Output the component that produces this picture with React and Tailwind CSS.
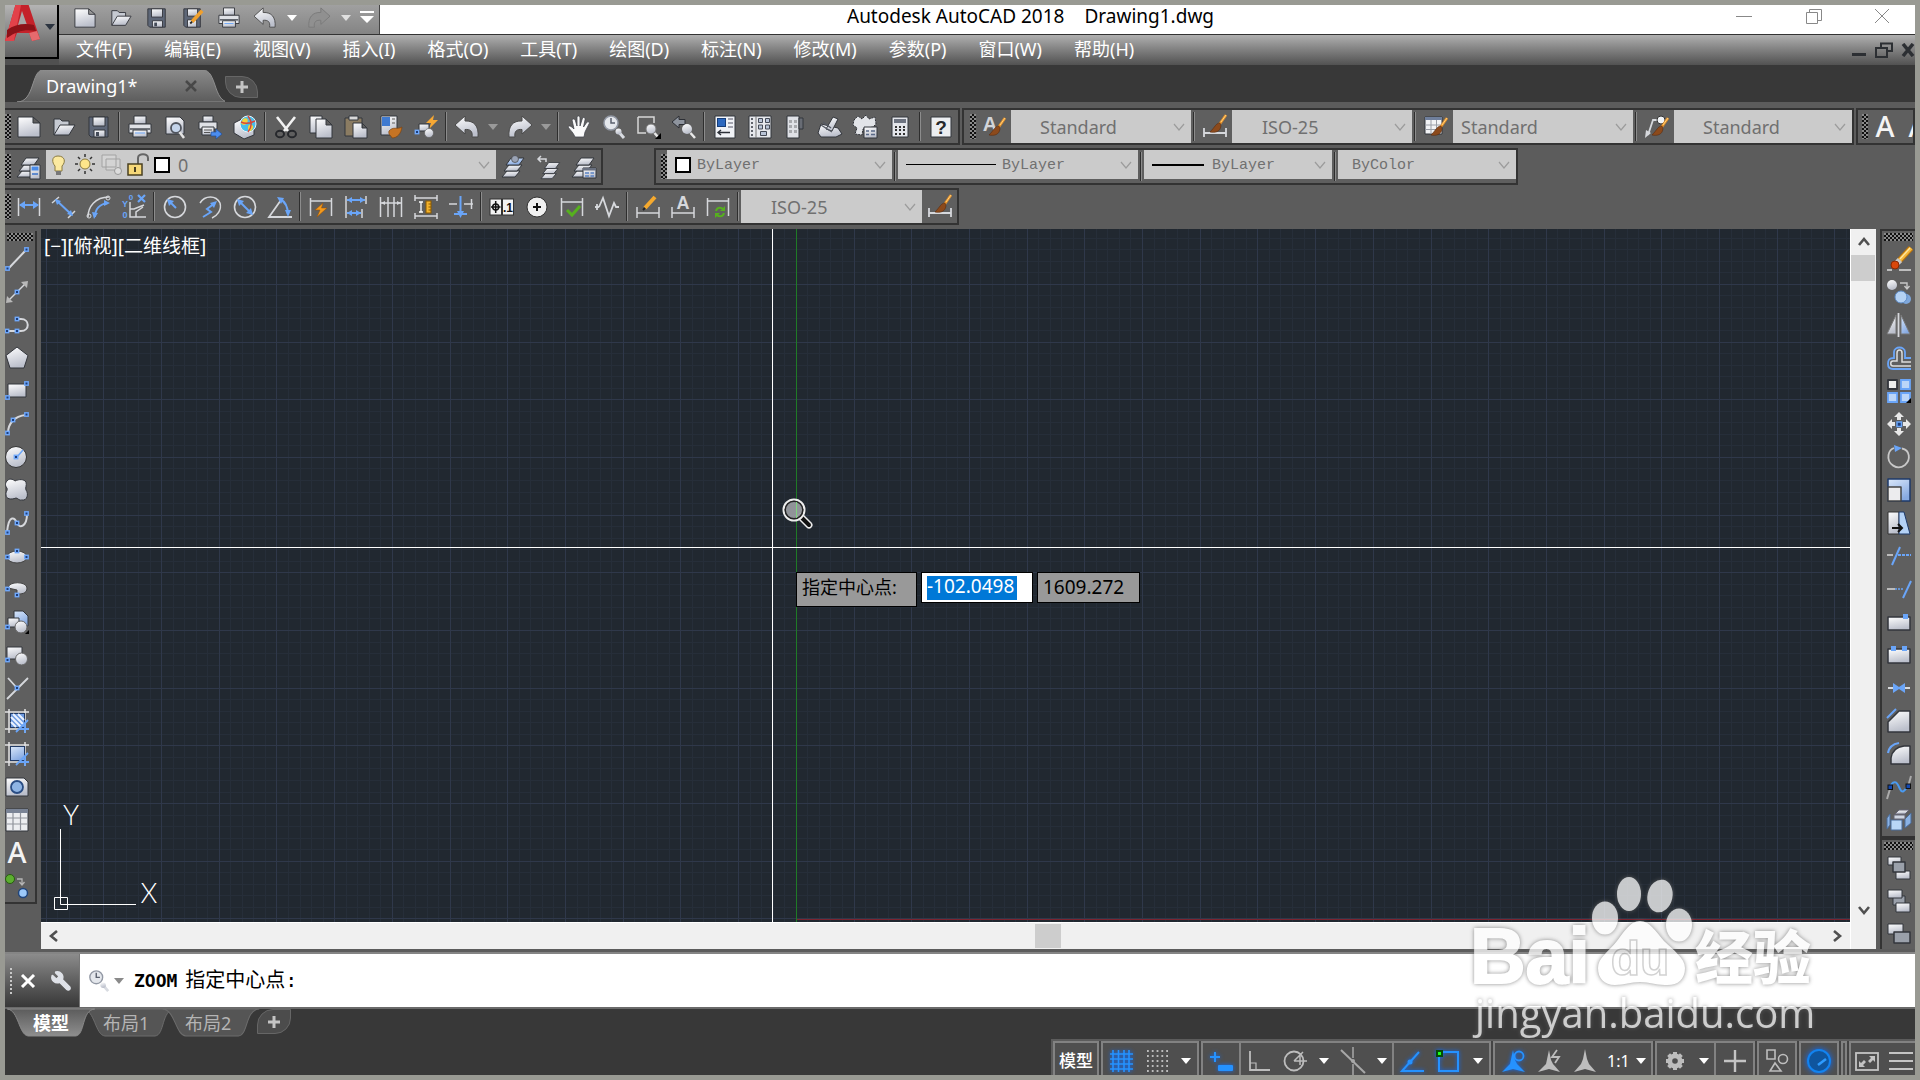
import React from 'react';
import { Wrench } from 'lucide-react';

const BLUE = '#6aa5f8';
const PALE = '#d6d8dc';

const Pt = ({ x, y }) => (
  <rect x={x - 1.7} y={y - 1.7} width="3.4" height="3.4" fill="#1d3f7d" stroke="#6fa8fb" strokeWidth="1.4" />
);

const Line = ({ d, c = PALE, w = 1.5, dash }) => (
  <path d={d} fill="none" stroke={c} strokeWidth={w} strokeDasharray={dash} />
);

const Shape = ({ d, f = 'url(#silver)', s = '#33363c', w = 1 }) => (
  <path d={d} fill={f} stroke={s} strokeWidth={w} strokeLinejoin="round" />
);

const Brush = () => (
  <>
    <Line d="M23 3 L16 13" c="#e8932c" w={2.6} />
    <Line d="M23 3 L18 10" c="#ffd27a" w={1} />
    <path d="M17 11 C13 11 12 15 7 20 C12 21 17 20 18 14 Z" fill="#8c4a1c" stroke="#5a2c0e" strokeWidth=".6" />
  </>
);

const Ends = () => <Line d="M1.5 3 V21 M22.5 3 V21" />;

const Bolt = () => <path d="M14 8 L6 15 H11 L8 22 L18 13 H12.5 Z" fill="#f39a1e" stroke="#9b4f00" strokeWidth=".5" />;

const Layers = ({ f = 'url(#silver)' }) => (
  <>
    <Shape d="M0 22 L5 16 H18 L13 22 Z" />
    <Shape d="M2 16 L7 10 H20 L15 16 Z" />
    <Shape d="M4 10 L9 3 H22 L17 10 Z" f={f} />
  </>
);

const ICONS = {
  new: <Shape d="M1 2 H16 L23 8 V22 H1 Z M16 2 V8 H23" />,
  open: (
    <>
      <Shape d="M2 20 V4 H8 L10 6 H17 V10" f="#c6cad2" />
      <Shape d="M2 20 L8 10 H23 L17 20 Z" f="url(#silver)" />
    </>
  ),
  save: (
    <>
      <Shape d="M2 2 H21 V22 H4 L2 20 Z" f="#5e6778" />
      <Shape d="M6 2 H18 V11 H6 Z" />
      <Shape d="M7 15 H18 V22 H7 Z" />
      <path d="M9 17 h3 v4 h-3z" fill="#444b58" />
    </>
  ),
  saveas: (
    <>
      <Shape d="M2 2 H20 V22 H4 L2 20 Z" f="#5e6778" />
      <Shape d="M6 2 H17 V10 H6 Z" />
      <Shape d="M6 14 H16 V22 H6 Z" />
      <Line d="M22 4 L11 16" c="#f0a02e" w={4} />
      <Line d="M11 16 L9 18" c="#222" w={2} />
    </>
  ),
  print: (
    <>
      <Shape d="M6 1 H18 V9 H6 Z" />
      <Shape d="M1 9 H23 V18 H1 Z" f="#dfe1e6" />
      <Shape d="M5 15 H19 V22 H5 Z" />
      <Line d="M2 14 H22" c="#4b4f57" w={1.5} />
      <Line d="M7 18 H17" c={BLUE} w={1} />
    </>
  ),
  preview: (
    <>
      <Shape d="M3 2 H17 L21 6 V19 H3 Z" />
      <circle cx="13" cy="13" r="5" fill="#c4d4ea" stroke="#50555e" strokeWidth="1.8" />
      <Line d="M16.500 17 L21 23" c="#e4e4e4" w={2.5} />
    </>
  ),
  publish: (
    <>
      <Shape d="M5 1 H15 V7 H5 Z" />
      <Shape d="M1 7 H19 V14 H1 Z" f="#dfe1e6" />
      <Shape d="M4 12 H16 V20 H4 Z" />
      <Line d="M6 15 H14 M6 17.500 H12" c="#555" w={1} />
      <path d="M13 17 H18 V14 L24 19 L18 24 V21 H13 Z" fill="#4b8df0" stroke="#234f96" strokeWidth=".7" />
    </>
  ),
  globe: (
    <>
      <Shape d="M1 8 L9 4 L21 12 V20 L11 24 L1 18 Z" />
      <circle cx="15" cy="9" r="8" fill="#49bde8" stroke="#e8f3fa" strokeWidth="1" />
      <path d="M10 4 C14 2 16 5 14 8 C12 11 9 10 8 8 Z M16 10 C20 9 22 12 18 16 C15 16 14 13 16 10 Z" fill="#f4d13c" />
      <Line d="M15 1 C19 6 19 12 15 17 M8 7 C12 9 18 8 22 6" c="#d8463a" w={1.4} />
    </>
  ),
  cut: (
    <>
      <Line d="M3 2 L14 16 M21 2 L10 16" c="#f2f2f2" w={2.6} />
      <ellipse cx="6" cy="19" rx="4" ry="3.300" fill="none" stroke="#26282c" strokeWidth="2" />
      <ellipse cx="18" cy="19" rx="4" ry="3.300" fill="none" stroke="#26282c" strokeWidth="2" />
    </>
  ),
  copy: (
    <>
      <Shape d="M1 1 H13 V18 H1 Z" />
      <Shape d="M7 4 H17 L23 10 V23 H7 Z M17 4 V10 H23" />
    </>
  ),
  paste: (
    <>
      <Shape d="M1 3 H18 V21 H1 Z" f="#8b7c62" />
      <Shape d="M5 1 H14 V5 H5 Z" f="#d8d8d8" />
      <Shape d="M9 8 H18 L23 13 V23 H9 Z M18 8 V13 H23" />
    </>
  ),
  match: (
    <>
      <Shape d="M2 1 H18 V20 H2 Z" />
      <rect x="3" y="2" width="8" height="9" fill="#3f7ad0" />
      <Line d="M13 4 H16 M13 8 H16" c="#888" />
      <path d="M10 16 C14 11 18 15 23 12 C22 19 18 23 13 23 C12 20 9 20 10 16 Z" fill="#c67424" stroke="#7c4310" strokeWidth=".7" />
    </>
  ),
  block: (
    <>
      <path d="M20 0 L12 8 H17 L15 14 L24 5 H19 Z" fill="#f7a833" />
      <Shape d="M5 9 H15 V16 H5 Z" />
      <circle cx="15" cy="18" r="4.500" fill="url(#silver)" stroke="#555" strokeWidth=".6" />
      <Pt x={3} y={17} />
    </>
  ),
  undo: <Shape d="M0 10 L10 1 V6 C19 5.500 24 11 23 22 H17 C18 16 15 14 10 14.500 V19 Z" f="url(#silver)" s="#4a4a4a" />,
  redo: <Shape d="M24 10 L14 1 V6 C5 5.500 0 11 1 22 H7 C6 16 9 14 14 14.500 V19 Z" f="url(#silver)" s="#4a4a4a" />,
  redoOff: <Shape d="M24 10 L14 1 V6 C5 5.500 0 11 1 22 H7 C6 16 9 14 14 14.500 V19 Z" f="#909090" s="#7a7a7a" />,
  hand: (
    <>
      <path d="M8 22 C6 17 3 15 1 12 C2 10 4 11 7 14 L5 5 C6 3 8 4 8.500 6 L10 11 L10 2 C11 0 13 1 13 3 V11 L15.500 3 C17 1.500 18.500 3 18 5 L16.500 12 L20 7 C22 6 23 8 22 9 L18 17 L17 22 Z" fill="#fafafa" stroke="#45484e" strokeWidth=".8" />
    </>
  ),
  zoom: (
    <>
      <circle cx="9" cy="8" r="7" fill="#e4e7ec" stroke="#9298a4" strokeWidth="1.500" />
      <Line d="M9 3 V8 H13" c="#5a606e" w={1.5} />
      <Line d="M15 15 L22 23" c="#d8dbe1" w={3} />
      <circle cx="16.500" cy="16.500" r="3" fill="url(#silver)" />
    </>
  ),
  zoomwin: (
    <>
      <Line d="M1 2 H17 V8 M1 2 V18 H9" c="#d8d8d8" />
      <circle cx="14" cy="14" r="5" fill="url(#silver)" stroke="#777" strokeWidth="1" />
      <Line d="M17.500 18 L21 22" c="#e8e8e8" w={2.5} />
      <path d="M24 18 V24 H18 Z" fill="#000" />
    </>
  ),
  zoomprev: (
    <>
      <path d="M0 7 L7 1 V4.500 H13 V9.500 H7 V13 Z" fill="#8e949e" stroke="#2c2f35" strokeWidth="1" />
      <circle cx="15" cy="14" r="5" fill="url(#silver)" />
      <Line d="M18.500 18 L23 23" c="#e8e8e8" w={2.5} />
    </>
  ),
  props: (
    <>
      <Shape d="M2 1 H22 V23 H2 Z" f="#f0f2f6" />
      <rect x="4.500" y="3.500" width="8" height="8" fill="#2c68bf" stroke="#163d78" />
      <Line d="M15 4 H20 M15 8 H20 M15 12 H20" c="#556" w={1} />
      <Line d="M5 17.500 H17 M8 15 L5 17.500 L8 20" c="#2c3038" w={1.4} />
    </>
  ),
  center: (
    <>
      <Shape d="M1 1 H23 V23 H1 Z" f="#e6e8ec" />
      <Line d="M4 3 V21" c="#60646c" w={2} dash="2 2" />
      <Line d="M8 1 V23" c="#777" w={1} />
      <g fill="#b9c4d6" stroke="#444a56">
        <path d="M10.500 3.500 h4 v4 h-4z M17.500 3.500 h4 v4 h-4z M10.500 10 h4 v4 h-4z M17.500 10 h4 v4 h-4z M12.500 16.500 h6 v4 h-6z" />
      </g>
    </>
  ),
  palettes: (
    <>
      <Shape d="M4 1 H16 V23 H4 Z" f="#dfe1e6" />
      <Shape d="M16 3 H20 V14 H16 Z" f="#686c74" />
      <g fill="#a7a9ad">
        <path d="M6 5 h3 v3 h-3z M11 5 h3 v3 h-3z M6 10 h3 v3 h-3z M11 10 h3 v3 h-3z M6 15 h3 v3 h-3z M11 15 h3 v3 h-3z" />
      </g>
    </>
  ),
  sheet: (
    <>
      <Shape d="M0 18 L3 9 L20 13 L24 19 L18 22 H3 Z" />
      <Shape d="M8 14 L15 2 L20 4 L14 16 Z" />
      <Line d="M3 10 L14 17 M5 7 L13 13" c="#555a64" w={1.4} />
    </>
  ),
  markup: (
    <>
      <path d="M1 5 L5 1 L9 4 L13 0 L16 4 L22 2 L23 9 L20 12 L10 14 L9 20 L2 19 L4 13 L0 10 Z" fill="#e2e4e8" stroke="#2f3239" strokeDasharray="2 1" />
      <Shape d="M11 12 H24 V23 H11 Z" />
      <Line d="M13 16 H16 M18 16 H22 M13 19.500 H16 M18 19.500 H22" c="#5a6a88" w={1.5} />
    </>
  ),
  calc: (
    <>
      <Shape d="M4 2 H20 V22 H4 Z" f="#e3e5ea" />
      <rect x="6" y="4" width="12" height="4" fill="#6d7380" />
      <path d="M7 11 h2 v2 h-2z M11 11 h2 v2 h-2z M15 11 h2 v2 h-2z M7 14 h2 v2 h-2z M11 14 h2 v2 h-2z M15 14 h2 v2 h-2z M7 18 h2 v2 h-2z M11 18 h2 v2 h-2z M15 18 h2 v2 h-2z" fill="#333" />
    </>
  ),
  help: (
    <>
      <Shape d="M2 2 H22 V22 H2 Z" f="#eceef1" />
      <text x="12" y="19" textAnchor="middle" fontSize="19" fontWeight="bold" fontFamily="Liberation Sans" fill="#26282c">?</text>
    </>
  ),
  textstyle: (
    <>
      <text x="8" y="16" textAnchor="middle" fontSize="20" fontFamily="Liberation Sans" fill="#d2d4d8" fontWeight="bold">A</text>
      <Brush />
    </>
  ),
  dimstyle: (
    <>
      <Line d="M1 13 V22 M23 13 V22 M1 18 H23" w={1.8} />
      <g transform="translate(0 -3)"><Brush /></g>
    </>
  ),
  tablestyle: (
    <>
      <Shape d="M1 2 H18 V19 H1 Z" f="#f2f3f5" />
      <rect x="1" y="2" width="17" height="3" fill="#6f7f9c" />
      <Line d="M1 10 H18 M1 14.500 H18 M7 5 V19 M12.500 5 V19" c="#9a9ea6" w={1} />
      <Brush />
    </>
  ),
  leaderstyle: (
    <>
      <Line d="M3 20 L8 5 H13" w={1.8} />
      <path d="M0 23 L1 15 L6 18 Z" fill={PALE} />
      <circle cx="16" cy="5" r="4" fill="#f1f3f5" stroke="#333" />
      <Brush />
    </>
  ),
  layerprops: (
    <>
      <Layers />
      <Shape d="M13 10 H23 V24 H13 Z" />
      <rect x="14.500" y="11.500" width="7" height="4" fill="#4a8be8" />
      <Line d="M15 19 H21" c="#3a72c8" />
    </>
  ),
  layercur: (
    <>
      <Layers f="url(#sky)" />
      <circle cx="13" cy="4" r="3.500" fill="#9aa3b5" stroke="#444" strokeWidth=".7" />
    </>
  ),
  layerprev: (
    <>
      <g transform="translate(4 5) scale(.85)"><Layers /></g>
      <Line d="M1 4 H9 V7 M4 1 L1 4 L4 7" />
    </>
  ),
  layerstate: (
    <>
      <Layers />
      <Shape d="M11 13 H24 V23 H11 Z" />
      <path d="M11 13 h13 v2.500 h-13z" fill="#6a7180" />
      <Line d="M13 18 H17 M18.500 18 H22 M13 21 H17 M18.500 21 H22" c="#5a82c4" />
    </>
  ),
  linear: (
    <>
      <Ends />
      <Line d="M3 10 H21" c={BLUE} w={2} />
      <path d="M2 10 L8 6 V14 Z M22 10 L16 6 V14 Z" fill={BLUE} />
    </>
  ),
  aligned: (
    <>
      <Line d="M0 8 L7 2 M16 23 L23 16" />
      <Line d="M4 5 L20 20" c={BLUE} w={2} />
      <path d="M3 4 L9 6 L5 10 Z M21 21 L15 19 L19 15 Z" fill={BLUE} />
    </>
  ),
  arclen: (
    <>
      <Line d="M1 22 C1 12 8 2 22 2" />
      <circle cx="2" cy="21" r="2" fill="none" stroke={PALE} />
      <circle cx="21" cy="3" r="2" fill="none" stroke={PALE} />
      <Line d="M8 22 C8 15 12 9 21 8" c={BLUE} w={2} />
      <path d="M7 24 L5 17 L11 18 Z M23 8 L17 5 V11 Z" fill={BLUE} />
    </>
  ),
  ordinate: (
    <>
      <Line d="M8 7 V22 H24 M8 14 H12 L22 10 M14 22 V17 L21 12" />
      <text x="3" y="12" fontSize="9" fontWeight="bold" fontFamily="Liberation Sans" textAnchor="middle" fill={BLUE}>Y</text>
      <text x="9" y="5" fontSize="8" fontWeight="bold" fontFamily="Liberation Sans" textAnchor="middle" fill={BLUE}>0</text>
      <text x="3" y="23" fontSize="9" fontWeight="bold" fontFamily="Liberation Sans" textAnchor="middle" fill={BLUE}>0</text>
      <Line d="M16 0 L23 7 M23 0 L16 7" c={BLUE} w={2.2} />
    </>
  ),
  radius: (
    <>
      <circle cx="12" cy="12" r="10.500" fill="none" stroke={PALE} strokeWidth="1.600" />
      <Line d="M13 13 L6 6" c={BLUE} w={2} />
      <path d="M4 4 L11 6 L6 11 Z" fill={BLUE} />
    </>
  ),
  jogged: (
    <>
      <Line d="M2 8 C7 0 18 0 22 8 C24 15 19 21 14 23" />
      <Line d="M5 22 L13 17 L9 14 L17 8" c={BLUE} w={2} />
      <path d="M19 6 L16 13 L12 8 Z" fill={BLUE} />
    </>
  ),
  diameter: (
    <>
      <circle cx="12" cy="12" r="10.500" fill="none" stroke={PALE} strokeWidth="1.600" />
      <Line d="M6 6 L18 18" c={BLUE} w={2} />
      <path d="M4 4 L11 6 L6 11 Z M20 20 L13 18 L18 13 Z" fill={BLUE} />
    </>
  ),
  angular: (
    <>
      <Line d="M13 5 L1 22 H24" w={1.8} />
      <Line d="M12 4 C18 7 20 13 20 20" c={BLUE} w={2} />
      <path d="M9 2 L16 3 L13 9 Z M20 22 L17 15 H23 Z" fill={BLUE} />
    </>
  ),
  quick: (
    <>
      <Ends />
      <Line d="M1 6 H23" />
      <Bolt />
    </>
  ),
  baseline: (
    <>
      <Line d="M2 1 V23 M22 1 V9 M18 14 V23" />
      <Line d="M3 5 H21 M3 18 H17" c={BLUE} w={2} />
      <path d="M3 5 L8 2 V8 Z M21 5 L16 2 V8 Z M3 18 L8 15 V21 Z M17 18 L12 15 V21 Z" fill={BLUE} />
    </>
  ),
  continue: (
    <>
      <Line d="M1.500 2 V22 M9 2 V22 M15 2 V22 M22.500 2 V22 M1 8 H23" />
      <path d="M2 8 L6 6 V10 Z M22 8 L18 6 V10 Z" fill={PALE} />
    </>
  ),
  space: (
    <>
      <Line d="M1 3 H23 M1 21 H23 M1 0 V6 M23 0 V6 M1 18 V24 M23 18 V24" />
      <Line d="M7 7 V17 M5 7 H9 M5 17 H9" c="#fff" w={1.3} />
      <rect x="12" y="6" width="5" height="12" fill="#f5b32c" stroke="#8b5a00" />
      <Line d="M14.500 9 H17 M14.500 12 H17 M14.500 15 H17" c="#8b5a00" w={1} />
    </>
  ),
  break: (
    <>
      <Line d="M0 9 H8 M15 9 H24 M22.500 4 V14" />
      <Line d="M11.500 1 V17 M5 19 H18" c={BLUE} w={2} />
      <path d="M11.500 23 L8 16 H15 Z" fill={BLUE} />
    </>
  ),
  tolerance: (
    <>
      <rect x="0" y="4" width="11.500" height="16" fill="#f2f2f2" stroke="#333" />
      <rect x="12.500" y="4" width="11" height="16" fill="#f2f2f2" stroke="#333" />
      <circle cx="5.700" cy="12" r="3" fill="none" stroke="#111" strokeWidth="1.500" />
      <Line d="M5.700 6 V18 M1 12 H10.500" c="#111" w={1.5} />
      <text x="18" y="17" fontSize="12" fontWeight="bold" fontFamily="Liberation Sans" textAnchor="middle" fill="#111">.1</text>
    </>
  ),
  centermark: (
    <>
      <circle cx="12" cy="12" r="10" fill="#f0f0f0" stroke="#333" />
      <Line d="M12 8 V16 M8 12 H16" c="#111" w={2} />
    </>
  ),
  inspect: (
    <>
      <Ends />
      <Line d="M1 7 H23" />
      <Line d="M7 15 L12 20 L20 11" c="#56b01e" w={3} />
    </>
  ),
  jogline: <Line d="M0 12 H4 M2 9 V15 M4 12 L8 3 L14 21 L19 8 L21 12 H24" w={1.8} />,
  dimedit: (
    <>
      <Line d="M1 12 V23 M23 12 V23 M1 18 H23" />
      <Line d="M19 2 L9 13" c="#f5a92e" w={4} />
      <Line d="M9 13 L7 15" c="#222" w={2} />
    </>
  ),
  dimtext: (
    <>
      <Line d="M1 12 V23 M23 12 V23 M1 18 H23" />
      <text x="12" y="14" fontSize="18" fontWeight="bold" fontFamily="Liberation Sans" textAnchor="middle" fill={PALE}>A</text>
    </>
  ),
  update: (
    <>
      <Ends />
      <Line d="M1 6 H23" />
      <Line d="M10 16 C11 12 15 12 17 14 M18 18 C17 22 13 22 11 20" c="#56b01e" w={2} />
      <path d="M19 11 V16 H14 Z M9 23 V18 H14 Z" fill="#56b01e" />
    </>
  ),

  line: <><Line d="M3 22 L21 3" w={2} /><Pt x={2.5} y={21.5} /><Pt x={21.5} y={2.5} /></>,
  xline: (
    <>
      <Line d="M4 20 L20 4" w={1.5} />
      <path d="M23 1 L22 8 L16 2 Z M1 23 L2 16 L8 22 Z" fill="#b8b8b8" />
      <Pt x={12} y={12} />
    </>
  ),
  pline: <><Line d="M2 18 H16 C25 18 25 6 16 6 H12" w={2} /><Pt x={2} y={18} /><Pt x={12} y={18} /><Pt x={12} y={6} /></>,
  polygon: <Shape d="M12 1 L23 9.500 L19 22 H5 L1 9.500 Z" />,
  rect: <><Shape d="M3 5 H21 V18 H3 Z" /><Pt x={2.5} y={18.500} /><Pt x={21.500} y={4.500} /></>,
  arc: <><Line d="M3 21 C3 12 9 4 21 3" w={2} /><Pt x={2.500} y={21} /><Pt x={8} y={8} /><Pt x={21.500} y={2.500} /></>,
  circle: <><circle cx="11" cy="12" r="10.500" fill="url(#silver)" stroke="#333" /><Line d="M12 12 L18 5" c={BLUE} /><Pt x={11} y={12} /></>,
  cloud: <Shape d="M2 3 C4 0 8 1 10 3 C14 1 19 1 21 4 C22 8 20 9 21 12 C24 16 22 23 17 22 C14 23 13 20 11 20 C6 22 1 21 1 17 C0 14 3 13 2 10 C0 8 0 5 2 3 Z" />,
  spline: <><Line d="M2 21 C4 2 10 7 12 12 C14 18 22 16 22 3" w={2} /><Pt x={2.500} y={21.500} /><Pt x={12} y={12} /><Pt x={21.500} y={2.500} /></>,
  ellipse: <><ellipse cx="12" cy="13" rx="10" ry="6" fill="url(#silver)" stroke="#444" /><Pt x={2.500} y={13} /><Pt x={21.500} y={13} /><Pt x={12} y={7} /></>,
  elarc: <><path d="M3 11 C3 4 22 4 22 11 C22 17 16 17 12 17 V13 Z" fill="url(#silver)" stroke="#444" /><Pt x={2.500} y={12} /><Pt x={12} y={18} /></>,
  insert: (
    <>
      <Shape d="M9 1 H18 L23 6 V16 H9 Z" f="url(#sky)" />
      <Shape d="M3 8 H14 V17 H3 Z" />
      <circle cx="16" cy="17" r="6" fill="url(#silver)" stroke="#666" />
      <Pt x={2.500} y={17} />
      <path d="M24 20 V24 H20 Z" fill="#000" />
    </>
  ),
  makeblock: <><Shape d="M2 4 H17 V16 H2 Z" /><circle cx="16.500" cy="16" r="6" fill="url(#silver)" stroke="#666" /><Pt x={2.500} y={17} /></>,
  point: <><Line d="M3 2 L12 12 M23 2 L2 23" w={1.8} /><Pt x={12} y={12} /></>,
  hatch: (
    <>
      <Line d="M4 0 V24 M20 0 V24 M0 3 H24 M0 20 H24" c="#e4e4e4" />
      <rect x="5.500" y="4.500" width="14" height="14" fill="#6e9be0" stroke="#223b66" />
      <Line d="M6 8 L16 18 M6 13 L11 18 M8 5 L19 16 M13 5 L19 11" c="#eaf2ff" w={2} />
      <Line d="M11 23 L23 11 M20 14 V24 M15 20 H24" c={BLUE} w={1.8} />
    </>
  ),
  gradient: (
    <>
      <Line d="M4 0 V24 M20 0 V24 M0 3 H24 M0 20 H24" c="#e4e4e4" />
      <rect x="5.500" y="4.500" width="14" height="14" fill="url(#sky)" stroke="#223b66" />
      <Line d="M11 23 L23 11 M20 14 V24 M15 20 H24" c={BLUE} w={1.8} />
    </>
  ),
  region: <><Shape d="M1 3 H19 L23 7 V21 H1 Z" /><circle cx="12" cy="12" r="6" fill="#8eb4e4" stroke="#2a4d84" strokeWidth="1.800" /></>,
  table: (
    <>
      <Shape d="M1 1 H23 V23 H1 Z" f="#eceef1" />
      <rect x="1" y="1" width="22" height="4" fill="#7a8496" />
      <Line d="M1 10 H23 M1 16 H23 M8 5 V23 M15.500 5 V23" c="#90949c" w={1.2} />
    </>
  ),
  mtext: <text x="12" y="22" textAnchor="middle" fontSize="29" fontFamily="Noto Sans" fontWeight="500" fill="#f4f4f4">A</text>,
  addsel: (
    <>
      <circle cx="5" cy="5" r="4.500" fill="#5cae30" stroke="#285d10" />
      <circle cx="18" cy="19" r="4.500" fill="#9cc8f8" stroke="#20457c" strokeWidth="1.500" />
      <Line d="M12 5 H17 V10 M14.500 8 L17 11 L19.500 8" c="#b5b5b5" w={1.3} />
    </>
  ),

  erase: (
    <>
      <Line d="M0 23 H5 M12 23 H24" c="#bdbdbd" w={1.8} />
      <Line d="M24 1 L12 14" c="#b8720c" w={6} />
      <Line d="M24 1 L12 14" c="#f5b83c" w={4} />
      <Line d="M23 1 L13 12" c="#ffe9a8" w={1.2} />
      <Line d="M13 13 L10 16" c="#c8c8c8" w={6} />
      <circle cx="8" cy="18" r="4" fill="#d9480c" stroke="#8a2a04" />
    </>
  ),
  copyobj: (
    <>
      <circle cx="5" cy="5" r="5" fill="url(#silver)" />
      <circle cx="19" cy="19" r="5" fill="#7fa8dc" />
      <circle cx="14" cy="17" r="6" fill="#b4d2f4" stroke="#5e8cc8" />
      <Line d="M13 3 H20 V8 M17.500 6 L20 9 L22.500 6" c="#c8c8c8" w={1.4} />
    </>
  ),
  mirror: <><Shape d="M9 2 V21 H0 Z" s="#777" /><Shape d="M14 2 V21 H23 Z" f="url(#sky)" s="#777" /><Line d="M11.500 0 V24" w={1.8} /></>,
  offset: (
    <>
      <Line d="M24 12 H18 V6 C18 0 7 0 7 6 V12 C2 12 1 14 1 18 C1 22 3 23 6 23 H24" c={BLUE} w={1.8} />
      <Line d="M24 16 H15 V7 C15 3 10 3 10 7 V15 H6 C3 15 3 20 6 20 H24" c="#dcdcdc" w={1.5} />
    </>
  ),
  array: (
    <>
      <Shape d="M1 1 H10 V10 H1 Z" f="#eee" w={1.8} />
      <g fill="#bcd6f8" stroke={BLUE} strokeWidth="1.800"><path d="M14 1 H23 V10 H14 Z M1 14 H10 V23 H1 Z M14 14 H23 V23 H14 Z" /></g>
      <path d="M24 19 V24 H19 Z" fill="#000" />
    </>
  ),
  move: (
    <>
      <path d="M12 0 L17 5 H14 V8 H10 V5 H7 Z M12 24 L7 19 H10 V16 H14 V19 H17 Z M0 12 L5 7 V10 H8 V14 H5 V17 Z M24 12 L19 17 V14 H16 V10 H19 V7 Z" fill="#e8e8e8" />
      <rect x="10" y="10" width="4.500" height="4.500" fill="#1d3f7d" stroke={BLUE} strokeWidth="1.500" />
    </>
  ),
  rotate: <><Line d="M15 3.500 C23 5 24 15 18 20 C10 26 0 19 1.500 10 C2 7 4 4 7 3" c="#c8c8c8" w={1.8} /><path d="M7 0 L15 3 L8 7 Z" fill={BLUE} /></>,
  scale: <><Shape d="M1 1 H23 V23 H1 Z" f="url(#sky)" s="#1e3a6a" w={1.5} /><Shape d="M1 9 H14 V23 H1 Z" f="#ececee" s="#444" w={1.5} /></>,
  stretch: (
    <>
      <Shape d="M1 1 H12 V23 H1 Z" s="#333" />
      <Shape d="M12 1 H17 L23 23 H12 Z" f="#b4d2f6" s="#1e3a6a" />
      <Line d="M5 17 H15 M11 13 L15 17 L11 21" c="#111" w={2} />
    </>
  ),
  trim: <><Line d="M0 11 H6" c="#bbb" w={2} /><Line d="M13 3 L5 21" c={BLUE} w={2} /><Line d="M11 11 H24" c={BLUE} w={1.8} dash="3 1" /></>,
  extend: <><Line d="M0 12 H8" c="#bbb" w={2} /><Line d="M8 12 H17" c={BLUE} w={1.5} dash="2 1" /><Line d="M24 4 L16 21" c={BLUE} w={2} /></>,
  breakpt: <><Shape d="M1 7 H23 V20 H1 Z" w={1.5} /><rect x="16" y="4" width="5" height="5" fill={BLUE} /></>,
  breakob: <><Shape d="M1 6 H23 V20 H1 Z" w={1.5} /><rect x="4" y="3" width="5" height="5" fill={BLUE} /><rect x="15" y="3" width="5" height="5" fill={BLUE} /></>,
  join: <><Line d="M1 12 H23" w={2} /><path d="M6 7 L12 11 L18 7 V17 L12 13 L6 17 Z" fill={BLUE} /></>,
  chamfer: <><Shape d="M12 2 H23 V23 H1 V13 Z" w={1.5} /><Line d="M0 9 L9 0" c={BLUE} w={2} /></>,
  fillet: <><Shape d="M17 4 H23 V22 H4 V16 C5 9 9 5 17 4 Z" w={1.5} /><Line d="M1 11 C2 5 6 2 12 1" c={BLUE} w={2.200} /></>,
  blend: (
    <>
      <Line d="M0 24 L3 14 M24 1 L21 12" c="#aaa" w={2} />
      <Line d="M3 12 C8 2 11 10 13 14 C16 20 18 14 21 11" c="#4a9af0" w={2} />
      <rect x="1" y="10" width="4.500" height="4.500" fill="#1348b0" stroke="#111" />
      <rect x="19" y="9" width="4.500" height="4.500" fill="#1348b0" stroke="#111" />
    </>
  ),
  explode: (
    <>
      <Shape d="M4 12 H15 V22 H4 Z" f="#b9d6f6" s="#4a6c9a" />
      <Shape d="M8 6 L12 2 H22 L18 6 Z" s="#667" />
      <Shape d="M18 11 L24 5 V15 L18 20 Z" f="#8ab2e4" s="#4a6c9a" />
      <Shape d="M0 10 L3 6 V17 L0 21 Z" f="#8ab2e4" s="#4a6c9a" />
      <Shape d="M7 7 H18 V11 H7 Z" f="#cfd6e2" s="#667" />
    </>
  ),
  front: <><Shape d="M1 1 H14 V9 H1 Z" /><Shape d="M9 15 H23 V23 H9 Z" /><Shape d="M6 6 H18 V16 H6 Z" f="#9aa0aa" w={1.5} /></>,
  back: <><Shape d="M6 7 H18 V16 H6 Z" f="#9aa0aa" /><Shape d="M1 1 H15 V9 H1 Z" /><Shape d="M9 14 H23 V23 H9 Z" /></>,
  above: <><Shape d="M1 2 H16 V12 H1 Z" /><Shape d="M7 10 H23 V21 H7 Z" f="#9aa0aa" w={1.5} /></>,

  gridOn: (
    <g className="drop-shadow-[0_0_2px_#0a6cff]">
      <Line d="M4 1 V23 M9.500 1 V23 M15 1 V23 M20 1 V23 M1 5 H24 M1 10 H24 M1 15 H24 M1 20 H24" c="#2592ff" w={1.6} />
    </g>
  ),
  snap: <Line d="M2 2 H23 M2 7 H23 M2 12 H23 M2 17 H23 M2 22 H23" c="#bdbdbd" w={1.8} dash="1.800 3" />,
  dyn: (
    <g className="drop-shadow-[0_0_2px_#0a6cff]">
      <Line d="M6 3 V13 M1 8 H11" c="#2592ff" w={2} />
      <rect x="9" y="16" width="15" height="6" rx="1" fill="#2592ff" />
    </g>
  ),
  ortho: <><Line d="M3 2 V21 H23" c="#bdbdbd" w={1.8} /><Line d="M3 14 H9 V21" c="#bdbdbd" w={1.2} /></>,
  polar: <><circle cx="11" cy="12" r="9.500" fill="none" stroke="#bdbdbd" strokeWidth="1.800" /><Line d="M11 12 L20 3 M11 12 H24 M17 6 V16" c="#bdbdbd" w={1.5} /></>,
  iso: <><Line d="M0 1 L24 24" c="#a8a8a8" w={2} /><Line d="M12 -2 V9 M12 15 V26" c="#a8a8a8" w={1.5} /><circle cx="12" cy="12" r="2" fill="#a8a8a8" /></>,
  otrack: (
    <g className="drop-shadow-[0_0_2px_#0a6cff]">
      <Line d="M19 3 L2 22 H24" c="#2592ff" w={2} />
      <circle cx="10" cy="13" r="2.500" fill="#2592ff" />
    </g>
  ),
  osnap: (
    <g className="drop-shadow-[0_0_2px_#0a6cff]">
      <Line d="M3 3 H22 V22 H3 Z" c="#2592ff" w={2} />
      <rect x="0" y="1" width="7" height="7" fill="#064a06" />
      <rect x="2" y="3" width="3" height="3" fill="#1aff1a" />
    </g>
  ),
  annoVis: (
    <g className="drop-shadow-[0_0_2px_#0a6cff]">
      <path d="M12 1 L14 11 L16 15 L24 23 L12 20 L1 23 L9 15 Z" fill="#2592ff" />
      <circle cx="18" cy="7" r="4.500" fill="none" stroke="#2592ff" strokeWidth="1.800" />
    </g>
  ),
  annoAuto: <><path d="M12 1 L14 11 L16 15 L23 23 L12 20 L1 23 L9 15 Z" fill="#bdbdbd" /><Line d="M20 1 L15 8 H22 L18 14" c="#bdbdbd" w={1.8} /></>,
  anno: <path d="M12 0 L14 10 L16 15 L23 23 L12 20 L1 23 L8 15 L10 10 Z" fill="#bdbdbd" />,
  gear: (
    <>
      <circle cx="12" cy="12" r="7.500" fill="#bdbdbd" />
      <Line d="M12 3 V21 M3 12 H21 M5.600 5.600 L18.400 18.400 M18.400 5.600 L5.600 18.400" c="#bdbdbd" w={4} />
      <circle cx="12" cy="12" r="2.800" fill="#4e4e4e" />
    </>
  ),
  plus: <Line d="M12 1 V23 M1 12 H23" c="#c4c4c4" w={2.4} />,
  isolate: (
    <>
      <Line d="M2 1 H10 V10 H2 Z M10 14 L16 22 H5 Z" c="#bdbdbd" w={1.600} />
      <circle cx="18" cy="10" r="4.500" fill="none" stroke="#bdbdbd" strokeWidth="1.600" />
    </>
  ),
  perf: (
    <g className="drop-shadow-[0_0_3px_#0a6cff]">
      <circle cx="12" cy="12" r="11" fill="#0f559e" stroke="#1283f0" strokeWidth="2" />
      <Line d="M11 16 L19 10" c="#2d9bff" w={2.6} />
    </g>
  ),
  clean: (
    <>
      <rect x="1" y="4" width="22" height="17" fill="none" stroke="#c4c4c4" strokeWidth="1.800" />
      <path d="M20 7 V13 L18 11 L15 14 L13 12 L16 9 L14 7 Z M4 18 V12 L6 14 L9 11 L11 13 L8 16 L10 18 Z" fill="#c4c4c4" />
    </>
  ),
  menu: <Line d="M0 4 H24 M0 12 H24 M0 20 H24" c="#c4c4c4" w={2.200} />,
};

const Icon = ({ name, className = 'size-6' }) => (
  <svg viewBox="0 0 24 24" className={`shrink-0 overflow-visible ${className}`} aria-hidden="true">{ICONS[name]}</svg>
);

const Defs = () => (
  <svg className="absolute size-0" aria-hidden="true">
    <defs>
      <linearGradient id="silver" x1="0" y1="0" x2="0.3" y2="1">
        <stop offset="0" stopColor="#ffffff" />
        <stop offset="1" stopColor="#bcc0cc" />
      </linearGradient>
      <linearGradient id="sky" x1="0" y1="0" x2="0.5" y2="1">
        <stop offset="0" stopColor="#dbe8fa" />
        <stop offset="1" stopColor="#87aae2" />
      </linearGradient>
      <linearGradient id="tab" x1="0" y1="0" x2="0" y2="1">
        <stop offset="0" stopColor="#8a8a8a" />
        <stop offset="1" stopColor="#5c5c5c" />
      </linearGradient>
      <linearGradient id="tabUp" x1="0" y1="0" x2="0" y2="1">
        <stop offset="0" stopColor="#5c5c5c" />
        <stop offset="1" stopColor="#8e8e8e" />
      </linearGradient>
    </defs>
  </svg>
);

const ToolButton = ({ name, className = 'w-[35px] h-full' }) => (
  <button type="button" aria-label={name} className={`flex shrink-0 items-center justify-center ${className}`}>
    <Icon name={name} />
  </button>
);

const Caret = ({ className = 'w-[18px] text-[#9a9a9a]' }) => (
  <button type="button" aria-label="more" className={`flex h-full shrink-0 items-center justify-center ${className}`}>
    <svg viewBox="0 0 10 6" className="h-[6px] w-[10px]"><path d="M0 0 H10 L5 6 Z" fill="currentColor" /></svg>
  </button>
);

const Sep = () => (
  <div className="flex h-full w-[6px] shrink-0 justify-center py-0.5">
    <div className="w-0.5 border-l border-[#2e2e2e] bg-[#8c8c8c]" />
  </div>
);

const Grip = () => (
  <div className="my-1 w-[6px] shrink-0 bg-[repeating-conic-gradient(#111_0_25%,#8a8a8a_0_50%)] bg-size-[4px_4px]" />
);

const GripBar = () => (
  <div className="h-[11px] w-full shrink-0 px-0.5 pt-0.5">
    <div className="h-2 bg-[repeating-conic-gradient(#111_0_25%,#8a8a8a_0_50%)] bg-size-[4px_4px]" />
  </div>
);

const Tools = ({ list }) =>
  list.split(' ').map((n, i) => {
    if (n === '|') return <Sep key={i} />;
    if (n === 'v') return <Caret key={i} />;
    return <ToolButton key={i} name={n} />;
  });

const Bar = ({ children, className = '' }) => (
  <div className={`flex h-[37px] shrink-0 border-y-2 border-r-2 border-[#333] bg-[#5f5f5f] ${className}`}>{children}</div>
);

const Combo = ({ label, value, className, children, textClass = 'text-lg font-[Noto_Sans]' }) => (
  <label className={`relative flex shrink-0 items-center bg-[#cbcbcb] text-[#707070] ${className}`}>
    {children}
    <select aria-label={label} className={`h-full min-w-0 flex-1 appearance-none bg-transparent outline-none ${textClass}`}>
      <option>{value}</option>
    </select>
    <svg viewBox="0 0 12 8" className="absolute right-1.5 h-2 w-3"><path d="M1 1 L6 7 L11 1" fill="none" stroke="#9c9c9c" strokeWidth="1.2" /></svg>
  </label>
);

const MENUS = ['文件(F)', '编辑(E)', '视图(V)', '插入(I)', '格式(O)', '工具(T)', '绘图(D)', '标注(N)', '修改(M)', '参数(P)', '窗口(W)', '帮助(H)'];

const Header = () => (
  <header className="flex shrink-0 bg-[#505050]">
    <button type="button" aria-label="Application menu" className="flex h-[54px] w-[54px] shrink-0 items-start border-r-2 border-b-2 border-black bg-linear-to-b from-[#b4b4b4] to-[#606060]">
      <svg viewBox="0 0 52 52" className="size-[52px]">
        <path d="M11 -2 H23 L35 34 L27 36 L24 28 H12 L9 36 H0 Z" fill="#c4222a" />
        <path d="M11 -2 L16 0 L9 36 H0 Z" fill="#e2424a" />
        <path d="M17 6 L13 20 H22 Z" fill="#a8a8a8" />
        <path d="M2 25 C10 19 20 18 29 20 L31 26 C20 24 12 26 2 33 Z" fill="#8c1218" />
        <path d="M24 28 L27 36 L35 34 L32 26 Z" fill="#e66a6e" />
        <path d="M40 19 H50 L45 25 Z" fill="#2c3440" />
      </svg>
    </button>
    <div className="min-w-0 flex-1">
      <div className="flex h-[29px] bg-white">
        <div className="flex w-[321px] shrink-0 items-center border-r border-[#444] bg-linear-to-b from-[#a0a0a0] to-[#848484] pb-1 pl-2">
          {['new', 'open', 'save', 'saveas', 'print', 'undo'].map((n) => (
            <button key={n} type="button" aria-label={n} className="flex w-9 justify-center"><Icon name={n} className="size-[22px]" /></button>
          ))}
          <Caret className="w-[18px] text-white" />
          <button type="button" aria-label="redo" className="flex w-9 justify-center"><Icon name="redoOff" className="size-[22px]" /></button>
          <Caret className="w-[18px] text-[#e0e0e0]" />
          <button type="button" aria-label="Customize" className="flex w-6 justify-center">
            <svg viewBox="0 0 14 13" className="h-[13px] w-[14px]"><path d="M0 0 H14 V2 H0 Z M0 5 H14 L7 12 Z" fill="#fff" /></svg>
          </button>
        </div>
        <h1 className="flex flex-1 items-center justify-center gap-5 pr-7 pb-2 font-['Noto_Sans'] text-[19px] leading-5 text-black">
          <span>Autodesk AutoCAD 2018</span>
          <span>Drawing1.dwg</span>
        </h1>
        <button type="button" aria-label="Minimize" className="flex w-[70px] items-center justify-center pb-2">
          <svg viewBox="0 0 16 16" className="size-4"><path d="M0 8.500 H16" stroke="#888" /></svg>
        </button>
        <button type="button" aria-label="Restore" className="flex w-[70px] items-center justify-center pb-2">
          <svg viewBox="0 0 16 16" className="size-4"><path d="M0.500 4.500 H11.500 V15.500 H0.500 Z M3.500 4 V1.500 H15.500 V12.500 H12" fill="none" stroke="#888" /></svg>
        </button>
        <button type="button" aria-label="Close" className="flex w-[66px] items-center justify-center pb-2">
          <svg viewBox="0 0 16 16" className="size-4"><path d="M1 1 L15 15 M15 1 L1 15" stroke="#888" /></svg>
        </button>
      </div>
      <nav className="flex h-[31px] items-center border-t border-[#333] bg-linear-to-b from-[#b0b0b0] to-[#525252] pl-[17px] text-lg text-white">
        <div className="flex flex-1 gap-8 pb-0.5">
          {MENUS.map((m) => <button key={m} type="button" className="whitespace-nowrap">{m}</button>)}
        </div>
        <button type="button" aria-label="Minimize drawing" className="mr-2">
          <svg viewBox="0 0 16 16" className="size-4"><path d="M1 11 H15 V14 H1 Z" fill="#2c2f33" /></svg>
        </button>
        <button type="button" aria-label="Restore drawing" className="mr-2">
          <svg viewBox="0 0 18 16" className="h-4 w-[18px]"><path d="M1 6 H12 V15 H1 Z M6 6 V1.500 H17 V9 H12" fill="none" stroke="#2c2f33" strokeWidth="2" /></svg>
        </button>
        <button type="button" aria-label="Close drawing">
          <svg viewBox="0 0 14 14" className="size-3.5"><path d="M2 1 L12 13 M12 1 L2 13" stroke="#2c2f33" strokeWidth="3.500" /></svg>
        </button>
      </nav>
    </div>
  </header>
);

const FileTabs = () => (
  <div className="flex h-[37px] shrink-0 items-end bg-[#383838] pl-1">
    <div className="relative flex h-8 w-[216px] items-center pl-[37px] text-white">
      <svg viewBox="0 0 216 32" preserveAspectRatio="none" className="absolute inset-0 size-full">
        <path d="M8 32 C26 32 22 0 34 0 H194 C208 0 204 32 220 32 Z" fill="url(#tab)" stroke="#8f8f8f" />
      </svg>
      <button type="button" className="relative w-[139px] text-left font-['Noto_Sans'] text-lg">Drawing1*</button>
      <button type="button" aria-label="Close tab" className="relative">
        <svg viewBox="0 0 12 12" className="size-3"><path d="M1 1 L11 11 M11 1 L1 11" stroke="#484848" strokeWidth="2.500" /></svg>
      </button>
    </div>
    <button type="button" aria-label="New tab" className="mb-1 flex h-[22px] w-[33px] items-center justify-center rounded-tr-2xl rounded-bl-2xl border border-[#666] bg-[#505050]">
      <svg viewBox="0 0 12 12" className="size-3"><path d="M6 0 V12 M0 6 H12" stroke="#c4c4c4" strokeWidth="3" /></svg>
    </button>
  </div>
);

const MONO = 'text-[15px] font-[Liberation_Mono] pt-1';

const Toolbars = () => (
  <div className="flex shrink-0 flex-col gap-[3px] bg-[#5c5c5c] pt-1.5 pb-1">
    <div className="flex gap-0.5 overflow-hidden">
      <Bar>
        <Grip />
        <Tools list="new open save | print preview publish globe | cut copy paste match block | undo v redo v | hand zoom zoomwin zoomprev | props center palettes sheet markup calc | help" />
      </Bar>
      <Bar className="border-l-2 pl-1.5">
        <Grip />
        <ToolButton name="textstyle" />
        <Combo label="Text style" value="Standard" className="w-[180px] pl-[29px]" />
        <Sep />
        <ToolButton name="dimstyle" />
        <Combo label="Dimension style" value="ISO-25" className="w-[180px] pl-[30px]" />
        <Sep />
        <ToolButton name="tablestyle" />
        <Combo label="Table style" value="Standard" className="w-[180px] pl-2" />
        <Sep />
        <ToolButton name="leaderstyle" />
        <Combo label="Leader style" value="Standard" className="w-[178px] pl-[29px]" />
      </Bar>
      <Bar className="flex-1 overflow-hidden border-l-2 pl-1">
        <Grip />
        <ToolButton name="mtext" className="h-full w-[33px]" />
        <ToolButton name="mtext" className="h-full w-[33px]" />
      </Bar>
    </div>
    <div className="flex gap-[51px]">
      <Bar>
        <Grip />
        <ToolButton name="layerprops" />
        <Combo label="Layer" value="0" className="mb-1 w-[450px] gap-1 pl-1" textClass="text-lg pl-1 font-[Noto_Sans]">
          <svg viewBox="0 0 100 24" className="h-6 w-[100px]">
            <path d="M8 3 C1 3 2 10 5 13 V18 H12 V13 C16 9 15 3 8 3 Z" fill="#fbe9a0" stroke="#8a7a40" />
            <path d="M6 18 H11 V22 H6 Z" fill="#777" />
            <circle cx="35" cy="11" r="5" fill="#fde58a" stroke="#8a7a40" />
            <path d="M35 1 V4 M35 18 V21 M25 11 H28 M42 11 H45 M28 4 L30 6 M42 4 L40 6 M28 18 L30 16 M42 18 L40 16" stroke="#333" strokeWidth="1.500" />
            <path d="M52 2 H66 V14 H52 Z M56 6 H70 V17 H56 Z" fill="#d4d4d4" stroke="#a2a2a2" />
            <circle cx="68" cy="18" r="3.500" fill="#ddd" stroke="#999" />
            <path d="M88 11 V5 C88 0 98 0 98 5 V8" fill="none" stroke="#666" strokeWidth="2" />
            <rect x="78" y="11" width="14" height="11" fill="#f6d878" stroke="#4a4020" strokeWidth="1.500" />
            <path d="M85 14 V19" stroke="#4a4020" strokeWidth="2" />
          </svg>
          <span className="size-4 shrink-0 border-2 border-black bg-white" />
        </Combo>
        <ToolButton name="layercur" />
        <ToolButton name="layerprev" />
        <ToolButton name="layerstate" />
      </Bar>
      <Bar className="border-l-2 pl-[5px]">
        <Grip />
        <Combo label="Colour" value="ByLayer" className="mb-1 w-[225px] gap-1.5 pl-2" textClass={MONO}>
          <span className="size-4 shrink-0 border-2 border-black bg-white" />
        </Combo>
        <Sep />
        <Combo label="Linetype" value="ByLayer" className="mb-1 w-60 gap-1.5 pl-2" textClass={MONO}>
          <span className="h-px w-[90px] shrink-0 bg-black" />
        </Combo>
        <Sep />
        <Combo label="Lineweight" value="ByLayer" className="mb-1 w-[188px] gap-2 pl-2" textClass={MONO}>
          <span className="h-0.5 w-[52px] shrink-0 bg-black" />
        </Combo>
        <Sep />
        <Combo label="Plot style" value="ByColor" className="mb-1 w-[178px] pl-3.5" textClass={MONO} />
      </Bar>
    </div>
    <div className="flex">
      <Bar>
        <Grip />
        <Tools list="linear aligned arclen ordinate | radius jogged diameter angular | quick baseline continue space break | tolerance centermark inspect jogline | dimedit dimtext update |" />
        <Combo label="Current dimension style" value="ISO-25" className="w-[181px] pl-[30px]" />
        <ToolButton name="dimstyle" />
      </Bar>
    </div>
  </div>
);

const LEFT = 'line xline pline polygon rect arc circle cloud spline ellipse elarc insert makeblock point hatch gradient region table mtext addsel'.split(' ');
const RIGHT = 'erase copyobj mirror offset array move rotate scale stretch trim extend breakpt breakob join chamfer fillet blend explode'.split(' ');

// grid lines of the model space, every fifth one is major
const GRID_STEP = 11.54;
const gridPath = (major) => {
  let d = '';
  for (let i = -5; i < 330; i++) {
    if ((i % 5 === 0) !== major) continue;
    const x = Math.round(4.7 + i * GRID_STEP) + 0.5;
    const y = Math.round(54.8 + i * GRID_STEP) + 0.5;
    d += `M${x} 0V2400M0 ${y}H3840`;
  }
  return d;
};

const Canvas = () => (
  <div className="relative min-h-0 flex-1 overflow-hidden bg-[#212830]">
    <svg className="absolute inset-0 size-full" aria-hidden="true">
      <path d={gridPath(false)} stroke="#262e39" fill="none" />
      <path d={gridPath(true)} stroke="#2f384a" fill="none" />
      <path d="M755.500 0 V2400" stroke="#1f7a26" />
      <path d="M756 690.500 H3840" stroke="#7c2430" />
      <path d="M731.500 0 V2400 M0 318.500 H3840" stroke="#fff" />
      <path d="M19.500 600 V675.500 H95 M13.500 668.500 H26.500 V680.500 H13.500 Z" stroke="#fff" fill="none" />
      <g fill="#fff" fontFamily="Lato" fontWeight="300" fontSize="27" textAnchor="middle">
        <text x="30" y="596">Y</text>
        <text x="108" y="674">X</text>
      </g>
      <g transform="translate(741 269)">
        <path d="M19 19 L27 27" stroke="#eee" strokeWidth="7" strokeLinecap="round" />
        <path d="M18 18 L27 27" stroke="#111" strokeWidth="4" strokeLinecap="round" />
        <circle cx="12" cy="12" r="10.500" fill="#a3a6aa" fillOpacity=".85" stroke="#eee" strokeWidth="2" />
        <circle cx="12" cy="12" r="8.800" fill="none" stroke="#222" strokeWidth="1.500" />
        <path d="M14.500 4 V20" stroke="#7ed47e" />
      </g>
    </svg>
    <div className="absolute top-[3px] left-[3px] text-[19px] leading-7 text-white">[−][俯视][二维线框]</div>
    <div className="absolute top-[343px] left-[755px] flex items-start gap-1 text-lg text-black">
      <label htmlFor="coord-x" className="flex h-[35px] w-[121px] items-center border border-black bg-[#999] pb-1.5 pl-[5px] whitespace-nowrap">指定中心点:</label>
      <div className="flex h-[31px] w-[112px] items-center border border-black bg-white pl-[5px]">
        <input id="coord-x" defaultValue="-102.0498" className="h-6 w-[90px] bg-[#0078d7] pb-0.5 font-['Noto_Sans'] text-[19px] text-white outline-none" />
      </div>
      <input aria-label="Y" defaultValue="1609.272" className="h-[31px] w-[103px] border border-black bg-[#999] pb-0.5 pl-[5px] font-['Noto_Sans'] text-[19px] outline-none" />
    </div>
  </div>
);

const ScrollArrow = ({ d, label }) => (
  <button type="button" aria-label={label} className="flex size-[26px] shrink-0 items-center justify-center">
    <svg viewBox="0 0 12 12" className="size-3"><path d={d} fill="none" stroke="#505050" strokeWidth="2.600" /></svg>
  </button>
);

const Workspace = () => (
  <main className="flex min-h-0 flex-1 bg-[#5c5c5c]">
    <aside className="w-9 shrink-0 pt-0.5">
      <div className="w-8 border-r-2 border-b-2 border-[#333] bg-[#5f5f5f]">
        <GripBar />
        {LEFT.map((n) => <ToolButton key={n} name={n} className="h-[33px] w-6" />)}
      </div>
    </aside>
    <div className="flex min-w-0 flex-1 flex-col">
      <Canvas />
      <div className="flex h-[27px] shrink-0 items-center border-t border-white bg-[#f0f0f0]">
        <ScrollArrow label="Scroll left" d="M9 1 L3 6 L9 11" />
        <div className="flex flex-1">
          <div className="flex-[968]" />
          <div className="h-6 w-[26px] bg-[#cdcdcd]" />
          <div className="flex-[763]" />
        </div>
        <ScrollArrow label="Scroll right" d="M3 1 L9 6 L3 11" />
      </div>
    </div>
    <div className="flex w-[26px] shrink-0 flex-col border-l border-white bg-[#f0f0f0]">
      <ScrollArrow label="Scroll up" d="M1 9 L6 3 L11 9" />
      <div className="h-[26px] w-6 bg-[#cdcdcd]" />
      <div className="flex-1" />
      <div className="mb-[26px]"><ScrollArrow label="Scroll down" d="M1 3 L6 9 L11 3" /></div>
    </div>
    <aside className="flex w-[39px] shrink-0 flex-col overflow-hidden pl-1">
      <div className="border-t-2 border-b-2 border-l-2 border-[#333] bg-[#5f5f5f]">
        <GripBar />
        {RIGHT.map((n) => <ToolButton key={n} name={n} className="h-[33px] w-[33px]" />)}
      </div>
      <div className="flex-1 border-t-2 border-l-2 border-[#333] bg-[#5f5f5f]">
        <GripBar />
        {['front', 'back', 'above'].map((n) => <ToolButton key={n} name={n} className="h-[33px] w-[33px]" />)}
      </div>
    </aside>
  </main>
);

const CommandLine = () => (
  <div className="mt-[3px] flex h-[57px] shrink-0 border-t-2 border-b-2 border-t-[#858585] border-b-[#6a6a6a] bg-white">
    <div className="flex w-[75px] shrink-0 items-center border-r border-[#777] bg-linear-to-b from-[#8c8c8c] to-[#383838] pl-[5px]">
      <div className="h-[26px] border-l-2 border-dotted border-[#c8c8c8]" />
      <button type="button" aria-label="Close command line" className="ml-2">
        <svg viewBox="0 0 16 14" className="h-3.5 w-4"><path d="M2 1 L14 13 M14 1 L2 13" stroke="#fff" strokeWidth="3" /></svg>
      </button>
      <button type="button" aria-label="Customize" className="ml-3.5">
        <Wrench className="size-[22px] -scale-x-100 fill-[#dfe2e8] text-[#dfe2e8]" strokeWidth={1.5} />
      </button>
    </div>
    <button type="button" aria-label="Recent commands" className="ml-2 flex items-center gap-1">
      <Icon name="zoom" className="size-[22px]" />
      <svg viewBox="0 0 10 6" className="h-[6px] w-[10px]"><path d="M0 0 H10 L5 6 Z" fill="#8a8a8a" /></svg>
    </button>
    <label htmlFor="command" className="ml-2.5 flex items-center gap-2 whitespace-nowrap text-black">
      <span className="font-['DejaVu_Sans_Mono'] text-lg font-bold">ZOOM</span>
      <span className="pb-0.5 font-['DejaVu_Sans_Mono','Noto_Sans_CJK_SC',monospace] text-xl">指定中心点:</span>
    </label>
    <input id="command" className="min-w-0 flex-1 outline-none" />
  </div>
);

const LayoutTab = ({ children, active, className }) => (
  <button type="button" className={`relative h-7 text-left text-lg leading-7 ${active ? 'font-bold text-white' : 'text-[#b4b4b4]'} ${className}`}>
    <svg viewBox="0 0 80 28" preserveAspectRatio="none" className="absolute inset-0 size-full overflow-visible">
      <path
        d="M-6 0 C6 1 6 26 16 27 H66 C76 26 72 1 86 0 Z"
        fill={active ? 'url(#tabUp)' : '#555'}
        stroke={active ? '#8a8a8a' : '#6c6c6c'}
      />
    </svg>
    <span className="relative">{children}</span>
  </button>
);

const StatusCell = ({ children, className = '' }) => (
  <div className={`flex shrink-0 items-center border-x-2 border-t-2 border-[#828282] bg-[#4f4f4f] pt-1 ${className}`}>{children}</div>
);

const StatusButton = ({ name, className = 'w-9' }) => (
  <button type="button" aria-label={name} className={`flex h-full shrink-0 items-center justify-center ${className}`}>
    <Icon name={name} />
  </button>
);

const Footer = () => (
  <footer className="flex h-[66px] shrink-0 flex-col justify-between bg-[#383838]">
    <div className="flex items-start pl-2">
      <LayoutTab active className="z-10 w-[76px] pl-5">模型</LayoutTab>
      <LayoutTab className="w-20 pl-3.5">布局1</LayoutTab>
      <LayoutTab className="w-[84px] pl-4">布局2</LayoutTab>
      <button type="button" aria-label="New layout" className="ml-1 flex h-[25px] w-[34px] items-center justify-center rounded-tl-2xl rounded-br-2xl border border-[#666] bg-[#4c4c4c]">
        <svg viewBox="0 0 12 12" className="size-3"><path d="M6 0 V12 M0 6 H12" stroke="#c4c4c4" strokeWidth="3" /></svg>
      </button>
    </div>
    <div className="flex h-9 justify-end pl-2">
      <div className="flex gap-0.5 border-t-2 border-l-2 border-[#5c5c5c] bg-[#444]">
        <StatusCell className="w-[46px] justify-center">
          <button type="button" className="text-[17px] font-medium whitespace-nowrap text-white">模型</button>
        </StatusCell>
        <StatusCell className="w-[98px]">
          <StatusButton name="gridOn" />
          <StatusButton name="snap" />
          <Caret className="w-[22px] text-white" />
        </StatusCell>
        <div className="flex">
          <StatusCell className="w-10"><StatusButton name="dyn" /></StatusCell>
          <StatusCell className="w-[153px] border-l-0">
            <StatusButton name="ortho" />
            <StatusButton name="polar" />
            <Caret className="w-[22px] text-white" />
            <StatusButton name="iso" />
            <Caret className="w-[22px] text-white" />
          </StatusCell>
          <StatusCell className="w-[97px] border-l-0">
            <StatusButton name="otrack" />
            <StatusButton name="osnap" />
            <Caret className="w-[23px] text-white" />
          </StatusCell>
        </div>
        <StatusCell className="w-40">
          <StatusButton name="annoVis" />
          <StatusButton name="annoAuto" />
          <StatusButton name="anno" />
          <button type="button" className="flex items-center gap-1.5 pl-1 font-['Noto_Sans'] text-base text-white">
            1:1
            <svg viewBox="0 0 10 6" className="h-[6px] w-[10px]"><path d="M0 0 H10 L5 6 Z" fill="currentColor" /></svg>
          </button>
        </StatusCell>
        <div className="flex">
          <StatusCell className="w-[61px]">
            <StatusButton name="gear" />
            <Caret className="w-[21px] text-white" />
          </StatusCell>
          <StatusCell className="w-[39px] justify-center border-l-0"><StatusButton name="plus" /></StatusCell>
        </div>
        <StatusCell className="w-10 justify-center"><StatusButton name="isolate" /></StatusCell>
        <StatusCell className="w-10 justify-center"><StatusButton name="perf" /></StatusCell>
        <StatusCell className="w-[6px]" />
        <StatusCell className="w-[66px] border-r-0">
          <StatusButton name="clean" className="w-8" />
          <StatusButton name="menu" className="w-9" />
        </StatusCell>
      </div>
    </div>
  </footer>
);

const Watermark = () => (
  <svg viewBox="0 0 350 180" className="pointer-events-none absolute right-[95px] bottom-[25px] z-20 h-[180px] w-[350px] opacity-75 drop-shadow-[0_0_2px_#666]" fill="#fff">
    <text x="0" y="113" fontSize="77" fontWeight="bold" fontFamily="Liberation Sans" stroke="#fff" strokeWidth="2">Bai</text>
    <ellipse cx="135" cy="48" rx="13" ry="16.500" />
    <ellipse cx="159" cy="24" rx="12" ry="17" />
    <ellipse cx="190" cy="26" rx="12.500" ry="16.500" transform="rotate(12 190 26)" />
    <ellipse cx="209" cy="55" rx="13" ry="16.500" />
    <path d="M170 51 C180 51 186 62 194 71 C203 80 215 88 215 98 C215 110 207 116 195 115 C185 115 180 112 170 112 C160 112 155 115 145 115 C134 115 128 108 128 98 C128 88 138 82 147 71 C154 62 160 51 170 51 Z" />
    <text x="170" y="105" fontSize="48" fontWeight="bold" fontFamily="Liberation Sans" textAnchor="middle" stroke="#c4c4c4" strokeWidth="1.500">du</text>
    <text x="225" y="109" fontSize="58" fontWeight="900" fontFamily="Noto Sans CJK SC">经验</text>
    <text x="5" y="158" fontSize="40" fontWeight="500" fontFamily="Open Sans">jingyan.baidu.com</text>
  </svg>
);

export default function App() {
  return (
    <div className="relative flex h-screen flex-col overflow-hidden border-[5px] border-[#999a93] bg-[#5c5c5c] font-['Noto_Sans','Noto_Sans_CJK_SC',sans-serif]">
      <Defs />
      <Header />
      <FileTabs />
      <Toolbars />
      <Workspace />
      <CommandLine />
      <Footer />
      <Watermark />
    </div>
  );
}
